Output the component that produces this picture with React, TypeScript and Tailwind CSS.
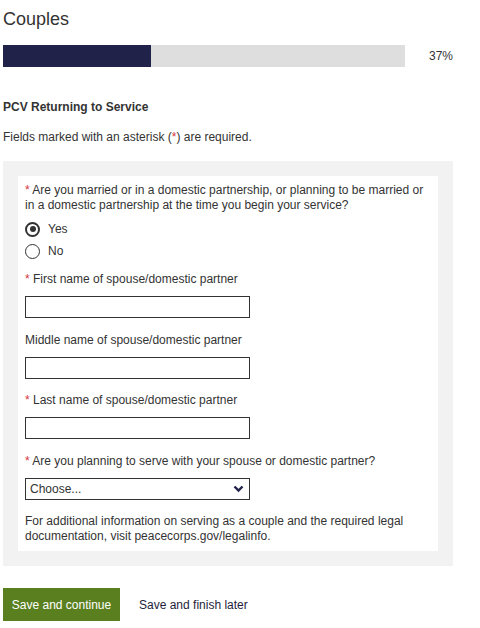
import { useState } from "react";

function Req() {
  return <span className="text-[#d4343b]">* </span>;
}

function TextField({ label, required, gap = "mt-[14px]" }: { label: string; required?: boolean; gap?: string }) {
  return (
    <div className={gap}>
      <label className="block leading-[15px]">
        {required && <Req />}
        {label}
      </label>
      <input
        type="text"
        className="mt-[9px] block h-[22px] w-[225px] border border-[#333] bg-white px-1 outline-none"
      />
    </div>
  );
}

export default function App() {
  const [married, setMarried] = useState<"yes" | "no">("yes");
  const progress = 37;

  return (
    <div className="min-h-screen bg-white px-[3px] text-[12px] text-[#333] font-['Liberation_Sans',Arial,sans-serif]">
      <h1 className="pt-[7px] text-[18px] leading-[24px] font-normal text-[#333]">Couples</h1>

      {/* Progress */}
      <div className="mt-[14px] flex items-center">
        <div className="h-[22px] w-[402px] bg-[#dedede]">
          <div className="h-full bg-[#20224a]" style={{ width: `${(148 / 402) * 100}%` }} />
        </div>
        <span className="ml-[24px] text-[12px]">{progress}%</span>
      </div>

      <h2 className="mt-[32px] font-bold leading-[16px]">PCV Returning to Service</h2>
      <p className="mt-[14px] leading-[16px]">
        Fields marked with an asterisk (<span className="text-[#d4343b]">*</span>) are required.
      </p>

      {/* Form panel */}
      <div className="mt-[16px] w-[450px] bg-[#f2f2f2] p-[15px]">
        <div className="bg-white px-[7px] pt-[7px] pb-[7px]">
          <p className="leading-[14.5px]">
            <Req />
            Are you married or in a domestic partnership, or planning to be married or in a domestic
            partnership at the time you begin your service?
          </p>
          <div className="mt-[10px] flex flex-col gap-[8px]">
            {(["yes", "no"] as const).map((v) => (
              <label key={v} className="flex h-[14px] cursor-pointer items-center gap-[8px]" onClick={() => setMarried(v)}>
                <span
                  className={`flex h-[15px] w-[15px] items-center justify-center rounded-full border bg-white ${
                    married === v ? "border-2 border-[#333]" : "border-[#333]"
                  }`}
                >
                  {married === v && <span className="h-[6px] w-[6px] rounded-full bg-[#333]" />}
                </span>
                <span>{v === "yes" ? "Yes" : "No"}</span>
              </label>
            ))}
          </div>

          <div className="mt-[8px]" />
          <TextField label="First name of spouse/domestic partner" required />
          <TextField label="Middle name of spouse/domestic partner" gap="mt-[15px]" />
          <TextField label="Last name of spouse/domestic partner" required />

          <div className="mt-[15px]">
            <label className="block leading-[15px]">
              <Req />
              Are you planning to serve with your spouse or domestic partner?
            </label>
            <div className="relative mt-[9px] h-[22px] w-[225px]">
              <select className="h-full w-full appearance-none border border-[#333] bg-white pl-[4px] text-[12px] text-[#333] outline-none">
                <option>Choose...</option>
                <option>Yes</option>
                <option>No</option>
              </select>
              <svg
                className="pointer-events-none absolute right-[6px] top-[7px]"
                width="11"
                height="8"
                viewBox="0 0 11 8"
                fill="none"
              >
                <path d="M1.5 1.5 L5.5 5.5 L9.5 1.5" stroke="#20224a" strokeWidth="2.4" />
              </svg>
            </div>
          </div>

          <p className="mt-[14px] leading-[15px]">
            For additional information on serving as a couple and the required legal documentation, visit
            peacecorps.gov/legalinfo.
          </p>
        </div>
      </div>

      {/* Actions */}
      <div className="mt-[22px] flex items-center">
        <button className="h-[33px] w-[117px] bg-[#5a7f1f] text-[12px] text-white">Save and continue</button>
        <button className="ml-[19px] text-[12px] text-[#1e1e3a]">Save and finish later</button>
      </div>
    </div>
  );
}
